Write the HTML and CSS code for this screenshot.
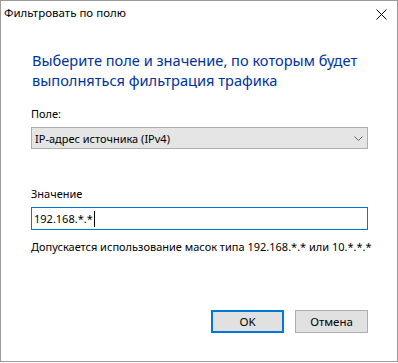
FILE: index.html
```html
<!DOCTYPE html>
<html lang="ru">

<head>
  <meta charset="utf-8">
  <title>Фильтровать по полю</title>
  <link rel="stylesheet" href="styles.css">
</head>

<body>
  <div class="window">
    <div class="titlebar">
      <span class="caption">Фильтровать по полю</span>
      <svg class="close" width="11" height="11" viewBox="0 0 11 11">
        <path d="M0.5 0.5 L10.5 10.5 M10.5 0.5 L0.5 10.5" stroke="#000" stroke-width="1" fill="none" />
      </svg>
    </div>

    <div class="content">
      <h1 class="instruction">Выберите поле и значение, по которым будет выполняться фильтрация трафика</h1>

      <div class="label">Поле:</div>
      <div class="combo">
        <span>IP-адрес источника (IPv4)</span>
        <svg class="chevron" width="9" height="5" viewBox="0 0 9 5">
          <polyline points="0.5,0.5 4.5,4.5 8.5,0.5" stroke="#606060" stroke-width="1" fill="none" />
        </svg>
      </div>

      <div class="label value-label">Значение</div>
      <div class="textbox">192.168.*.*<span class="caret"></span></div>

      <p class="hint">Допускается использование масок типа 192.168.*.* или 10.*.*.*</p>

      <div class="buttons">
        <button class="btn default">OK</button>
        <button class="btn">Отмена</button>
      </div>
    </div>
  </div>
</body>

</html>
```

FILE: styles.css
```css
body {
  margin: 0;
  background: #ffffff;
  font-family: "Noto Sans", "Liberation Sans", sans-serif;
  font-size: 11px;
  color: #000000;
}

.window {
  width: 398px;
  height: 362px;
  box-sizing: border-box;
  border: 1px solid #9b9b9b;
  background: #ffffff;
  display: flex;
  flex-direction: column;
}

.titlebar {
  height: 30px;
  display: flex;
  justify-content: space-between;
  align-items: flex-start;
  padding: 4px 10px 0 3px;
  box-sizing: border-box;
  line-height: 16px;
}

.caption {
  font-size: 11.5px;
}

.close {
  margin-top: 4px;
}

.content {
  flex: 1;
  display: flex;
  flex-direction: column;
  padding: 0 29px 0 30px;
}

.instruction {
  margin: 19px 0 0 1px;
  font-size: 14.6px;
  font-weight: normal;
  line-height: 20px;
  color: #003399;
}

.label {
  margin-top: 16px;
  line-height: 16px;
}

.value-label {
  margin-top: 37px;
}

.combo {
  margin-top: 5px;
  height: 22px;
  box-sizing: border-box;
  border: 1px solid #adadad;
  background: #e5e5e5;
  display: flex;
  align-items: center;
  justify-content: space-between;
  padding: 0 4px 0 3px;
}

.chevron {
  margin-top: 1px;
}

.textbox {
  margin-top: 5px;
  height: 23px;
  box-sizing: border-box;
  border: 1px solid #0078d7;
  display: flex;
  align-items: center;
  padding: 0 2px;
}

.caret {
  display: inline-block;
  width: 1px;
  height: 16px;
  background: #000000;
  margin-left: 1px;
}

.hint {
  margin: 9px 0 0 0;
  line-height: 16px;
  white-space: nowrap;
}

.buttons {
  margin-top: 55px;
  display: flex;
  justify-content: flex-end;
  gap: 11px;
}

.btn {
  width: 73px;
  height: 23px;
  box-sizing: border-box;
  border: 1px solid #adadad;
  background: #e1e1e1;
  font-family: inherit;
  font-size: 11.5px;
  color: #000000;
  padding: 0;
}

.btn.default {
  border: 2px solid #0078d7;
}
```
